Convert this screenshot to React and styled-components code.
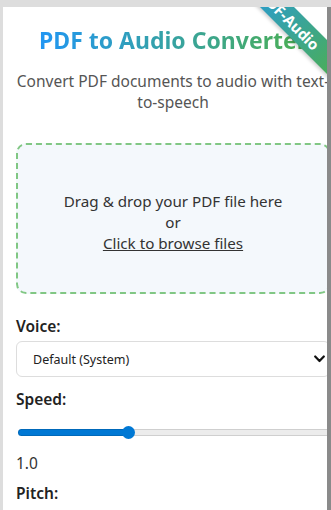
import React, { useState } from "react";
import styled, { createGlobalStyle } from "styled-components";

const Global = createGlobalStyle`
  html, body { margin: 0; padding: 0; background: #dddddd; }
  body { font-family: "Noto Sans", "Open Sans", sans-serif; color: #333; overflow: hidden; }
  * { box-sizing: border-box; }
`;

const Page = styled.div`
  padding: 7px 0 0 3px;
  height: 510px;
`;

const Card = styled.div`
  position: relative;
  overflow: hidden;
  background: #ffffff;
  border-right: 4px solid #8a8a8a;
  height: 503px;
  padding-left: 13px;
`;

const Content = styled.div`
  width: 314px;
`;

const Ribbon = styled.div`
  position: absolute;
  left: 212px;
  top: 1px;
  width: 150px;
  height: 24px;
  transform: rotate(45deg);
  background: linear-gradient(90deg, #2196f3, #4caf50);
  color: #fff;
  font-weight: 700;
  font-size: 15px;
  line-height: 24px;
  text-align: center;
  box-shadow: 0 2px 4px rgba(0, 0, 0, 0.2);
  z-index: 2;
`;

const Title = styled.h1`
  margin: 19px 0 0;
  text-align: center;
  font-size: 23px;
  line-height: 29px;
  font-weight: 700;
`;

const GradientText = styled.span`
  display: inline-block;
  background: linear-gradient(90deg, #2196f3, #4caf50);
  -webkit-background-clip: text;
  background-clip: text;
  color: transparent;
`;

const Subtitle = styled.p`
  margin: 16px 0 0;
  text-align: center;
  font-size: 15.5px;
  line-height: 21px;
  color: #555;
`;

const DropZone = styled.div`
  margin-top: 30px;
  height: 151px;
  padding-top: 8px;
  border: 2px dashed #81c784;
  border-radius: 10px;
  background: #f4f8fc;
  display: flex;
  flex-direction: column;
  align-items: center;
  justify-content: center;
  font-size: 15.2px;
  line-height: 21px;
  color: #333;
`;

const Browse = styled.span`
  text-decoration: underline;
  cursor: pointer;
`;

const Group = styled.div`
  margin-top: ${(p) => p.$mt || 0}px;
`;

const Label = styled.label`
  display: block;
  font-size: 15.5px;
  line-height: 21px;
  font-weight: 600;
  color: #222;
  margin-bottom: ${(p) => p.$mb || 0}px;
`;

const SelectWrap = styled.div`
  position: relative;
`;

const Select = styled.select`
  appearance: none;
  width: 100%;
  height: 36px;
  border: 1px solid #dddddd;
  border-radius: 6px;
  background: #fff;
  padding: 0 16px;
  font-family: "Noto Sans", sans-serif;
  font-size: 12.5px;
  color: #222;
`;

const Chevron = styled.svg`
  position: absolute;
  right: 5px;
  top: 14px;
  width: 11px;
  height: 8px;
  pointer-events: none;
`;

const Range = styled.input`
  appearance: none;
  -webkit-appearance: none;
  display: block;
  width: 324px;
  margin: 0 0 0 2px;
  height: 14px;
  background: transparent;

  &::-webkit-slider-runnable-track {
    height: 7px;
    border-radius: 4px;
    background: linear-gradient(
      to right,
      #0078d4 0,
      #0078d4 var(--p),
      #ececec var(--p),
      #ececec 100%
    );
    box-shadow: inset 0 0 0 1px rgba(0, 0, 0, 0.12);
  }
  &::-webkit-slider-thumb {
    -webkit-appearance: none;
    width: 13px;
    height: 13px;
    border-radius: 50%;
    background: #0078d4;
    margin-top: -3px;
    border: none;
  }
`;

const Value = styled.div`
  font-size: 15.5px;
  line-height: 21px;
  color: #333;
`;

export default function App() {
  const [speed, setSpeed] = useState(1);
  const pct = ((speed - 0.5) / 1.5) * 100;
  return (
    <Page>
      <Global />
      <Card>
        <Ribbon>PDF-Audio</Ribbon>
        <Content>
          <Title>
            <GradientText>PDF to Audio Converter</GradientText>
          </Title>
          <Subtitle>Convert PDF documents to audio with text-to-speech</Subtitle>
          <DropZone>
            <div>Drag &amp; drop your PDF file here</div>
            <div>or</div>
            <Browse>Click to browse files</Browse>
          </DropZone>
          <Group $mt={22}>
            <Label $mb={4}>Voice:</Label>
            <SelectWrap>
              <Select defaultValue="default">
                <option value="default">Default (System)</option>
              </Select>
              <Chevron viewBox="0 0 11 8">
                <path d="M1.2 1.5 L5.5 6 L9.8 1.5" fill="none" stroke="#111" strokeWidth="2.2" strokeLinecap="round" strokeLinejoin="round" />
              </Chevron>
            </SelectWrap>
          </Group>
          <Group $mt={12}>
            <Label $mb={15}>Speed:</Label>
            <Range
              type="range"
              min="0.5"
              max="2"
              step="0.1"
              value={speed}
              onChange={(e) => setSpeed(parseFloat(e.target.value))}
              style={{ "--p": `${pct}%` }}
            />
            <Value style={{ marginTop: 14 }}>{speed.toFixed(1)}</Value>
          </Group>
          <Group $mt={9}>
            <Label>Pitch:</Label>
          </Group>
        </Content>
      </Card>
    </Page>
  );
}
